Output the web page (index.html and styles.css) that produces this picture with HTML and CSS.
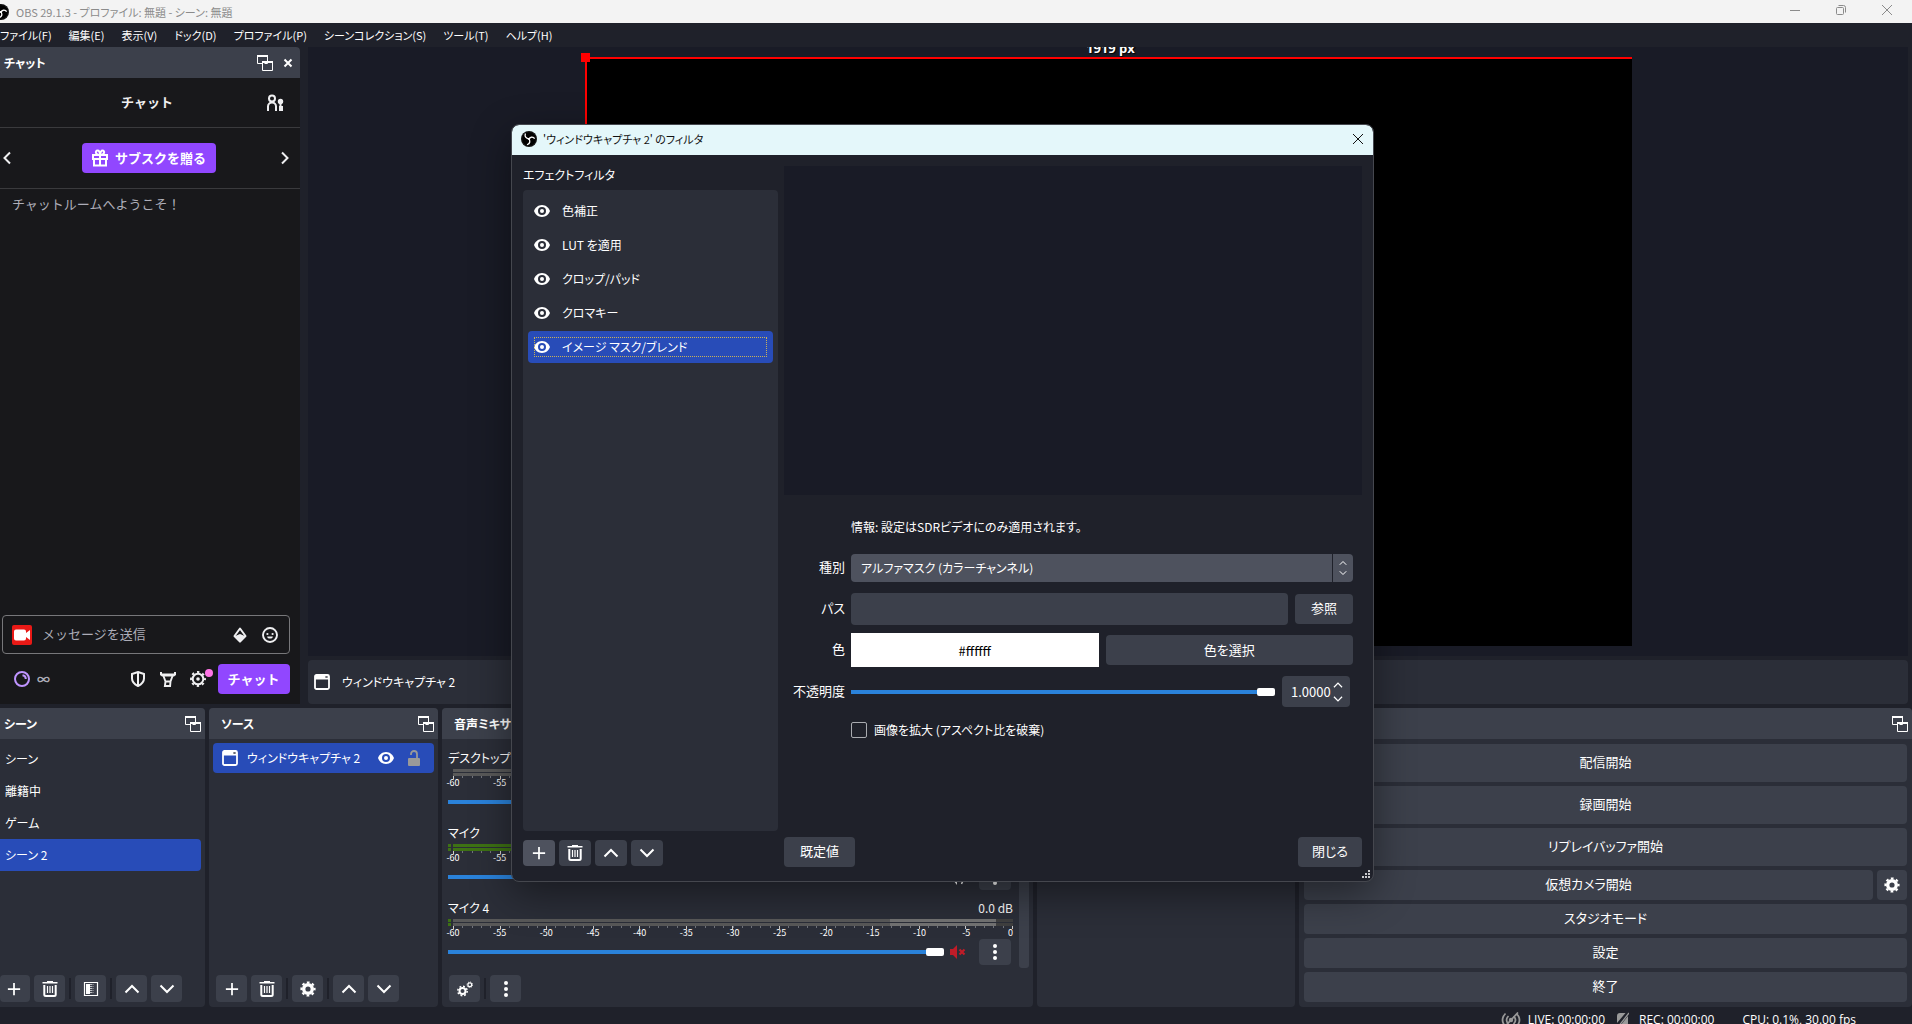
FILE: index.html
```html
<!DOCTYPE html>
<html lang="ja">
<head>
<meta charset="utf-8">
<title>OBS 29.1.3 - プロファイル: 無題 - シーン: 無題</title>
<link rel="stylesheet" href="styles.css">
</head>
<body>
<svg class="sprite" aria-hidden="true">
  <symbol id="obs" viewBox="0 0 16 16"><circle cx="8" cy="8" r="8" fill="#000"/><circle cx="8" cy="8" r="7.3" fill="none" stroke="#fff" stroke-opacity=".25" stroke-width=".4"/><path d="M4.300 3c-.8 2.400.6 4.400 3.700 5M13.300 7.200C11.400 5.600 9 6 8 8M6.500 13.500C8.900 12.700 9.500 10.200 8 8" fill="none" stroke="#fff" stroke-width="1.300" stroke-linecap="round"/><circle cx="8" cy="8" r="1.100" fill="#fff"/></symbol>
  <symbol id="float" viewBox="0 0 16 16"><path d="M.5 .5h10v8h-3M5 8.500H.5v-8" fill="none" stroke="currentColor"/><path d="M0 0h11v2H0zM5 6h11v2H5z" fill="currentColor"/><path d="M5.500 6.500h10v9h-10z" fill="none" stroke="currentColor"/></symbol>
  <symbol id="cross" viewBox="0 0 10 10"><path d="M1.500 1.500l7 7m0-7l-7 7" stroke="currentColor" stroke-width="2" fill="none"/></symbol>
  <symbol id="thincross" viewBox="0 0 12 12"><path d="M1 1l10 10m0-10L1 11" stroke="currentColor" fill="none"/></symbol>
  <symbol id="minimize" viewBox="0 0 12 12"><path d="M1 6.500h10" stroke="currentColor" fill="none"/></symbol>
  <symbol id="restore" viewBox="0 0 12 12"><rect x="1.500" y="3.500" width="7" height="7" rx="1" fill="none" stroke="currentColor"/><path d="M3.500 1.500h5a2 2 0 0 1 2 2v5" stroke="currentColor" fill="none"/></symbol>
  <symbol id="people" viewBox="0 0 18 18"><circle cx="6" cy="4.500" r="3" fill="none" stroke="currentColor" stroke-width="2"/><path d="M2 17v-4.500a4 4 0 0 1 8 0V17" fill="none" stroke="currentColor" stroke-width="2"/><circle cx="14.500" cy="7.500" r="2.700" fill="currentColor"/><path d="M13.500 9h2v3h1.500v5h-4v-5h.5z" fill="currentColor"/></symbol>
  <symbol id="gift" viewBox="0 0 18 18"><path d="M2 6h14v4H2zM3 10h12v6.500H3zM9 6v10M9 6C4 6 4 1.500 6.500 1.500S9 4 9 6s0-4.500 2.500-4.500S14 6 9 6" fill="none" stroke="currentColor" stroke-width="2"/></symbol>
  <symbol id="left" viewBox="0 0 10 14"><path d="M8 1.500L2.500 7 8 12.500" fill="none" stroke="currentColor" stroke-width="2"/></symbol>
  <symbol id="right" viewBox="0 0 10 14"><path d="M2 1.500L7.500 7 2 12.500" fill="none" stroke="currentColor" stroke-width="2"/></symbol>
  <symbol id="up" viewBox="0 0 16 16"><path d="M1.500 11.500L8 5l6.500 6.500" fill="none" stroke="currentColor" stroke-width="2"/></symbol>
  <symbol id="down" viewBox="0 0 16 16"><path d="M1.500 4.500L8 11l6.500-6.500" fill="none" stroke="currentColor" stroke-width="2"/></symbol>
  <symbol id="plus" viewBox="0 0 16 16"><path d="M8 1v14M1 8h14" fill="none" stroke="currentColor" stroke-width="2"/></symbol>
  <symbol id="trash" viewBox="0 0 16 16"><path d="M.5 1.800h15M5 .8h6" fill="none" stroke="currentColor" stroke-width="1.600"/><path d="M2.300 4v9.500q0 1.500 1.500 1.500h8.400q1.500 0 1.500-1.500V4" fill="none" stroke="currentColor" stroke-width="2"/><path d="M5.500 5v7M8 5v7M10.500 5v7" stroke="currentColor" stroke-width="1.200"/></symbol>
  <symbol id="filter" viewBox="0 0 16 16"><path d="M1.500 1.500h13v13h-13z" fill="none" stroke="currentColor" stroke-width="1.200"/><path d="M3 3h4v10H3z" fill="currentColor"/><path d="M8 3v10" stroke="currentColor" stroke-width="1.500" stroke-dasharray="1 1" opacity=".9"/><path d="M10 3v10" stroke="currentColor" stroke-width="1.500" stroke-dasharray="1 1" opacity=".4"/></symbol>
  <symbol id="gear" viewBox="0 0 16 16"><circle cx="8" cy="8" r="4.300" fill="none" stroke="currentColor" stroke-width="3.400"/><circle cx="8" cy="8" r="6.600" fill="none" stroke="currentColor" stroke-width="2" stroke-dasharray="2.700 2.483" stroke-dashoffset="1.350"/></symbol>
  <symbol id="gears" viewBox="0 0 16 16"><circle cx="5.500" cy="10" r="3" fill="none" stroke="currentColor" stroke-width="2"/><circle cx="5.500" cy="10" r="4.700" fill="none" stroke="currentColor" stroke-width="1.500" stroke-dasharray="1.850 1.840"/><circle cx="12.800" cy="3.800" r="1.900" fill="none" stroke="currentColor" stroke-width="1.200"/><circle cx="12.800" cy="3.800" r="2.800" fill="none" stroke="currentColor" stroke-width=".9" stroke-dasharray="1.100 1.100"/></symbol>
  <symbol id="dots" viewBox="0 0 16 16"><circle cx="8" cy="2" r="2" fill="currentColor"/><circle cx="8" cy="8" r="2" fill="currentColor"/><circle cx="8" cy="14" r="2" fill="currentColor"/></symbol>
  <symbol id="window" viewBox="0 0 16 16"><rect x="1" y="1" width="14" height="14" rx="1.500" fill="none" stroke="currentColor" stroke-width="1.800"/><path d="M1 1h14v4.500H1z" fill="currentColor"/><path d="M11.500 2l2 2m0-2l-2 2" stroke="#2b2e38" stroke-width=".9"/></symbol>
  <symbol id="eye" viewBox="0 0 16 12"><path fill-rule="evenodd" d="M8 0c4 0 7 3 8 6-1 3-4 6-8 6S1 9 0 6c1-3 4-6 8-6zm0 2a4 4 0 1 0 0 8 4 4 0 0 0 0-8z" fill="currentColor"/><circle cx="8" cy="6" r="2" fill="currentColor"/></symbol>
  <symbol id="unlock" viewBox="0 0 12 16"><path d="M3 5V4a3 3 0 0 1 6 0v4" fill="none" stroke="currentColor" stroke-width="1.800"/><rect y="8" width="12" height="8" rx="1" fill="currentColor"/></symbol>
  <symbol id="bits" viewBox="0 0 14 16"><path d="M7 1.500L1.500 9 7 14.500 12.500 9z" fill="none" stroke="currentColor" stroke-width="2" stroke-linejoin="round"/><path d="M1 9.500L7 7l6 2.500L7 15.500z" fill="currentColor"/></symbol>
  <symbol id="smile" viewBox="0 0 16 16"><circle cx="8" cy="8" r="7" fill="none" stroke="currentColor" stroke-width="1.900"/><circle cx="5.400" cy="7" r="1.100" fill="currentColor"/><circle cx="10.600" cy="7" r="1.100" fill="currentColor"/><path d="M5.200 9.500h5.600a2.800 2 0 0 1-5.600 0z" fill="currentColor"/></symbol>
  <symbol id="camera" viewBox="0 0 20 20"><rect width="20" height="20" rx="2" fill="#e91916"/><path d="M4 4.500h8a2 2 0 0 1 2 2V8l4-3v10l-4-3v1.500a2 2 0 0 1-2 2H4a2 2 0 0 1-2-2v-7a2 2 0 0 1 2-2z" fill="#fff"/></symbol>
  <symbol id="points" viewBox="0 0 16 16"><circle cx="8" cy="8" r="7" fill="none" stroke="currentColor" stroke-width="2"/><path d="M8.500 4.200A3.800 3.800 0 0 1 11.800 8" fill="none" stroke="currentColor" stroke-width="2"/></symbol>
  <symbol id="shield" viewBox="0 0 14 16"><path d="M7 1l6 2v4.500c0 3-2 5.500-6 7.500-4-2-6-4.500-6-7.500V3z" fill="none" stroke="currentColor" stroke-width="2"/><path d="M7 1v14" stroke="currentColor" stroke-width="2"/></symbol>
  <symbol id="sword" viewBox="0 0 16 16"><path d="M0 1h2v1.500h12V1h2v3l-2 1.500H2L0 4z" fill="currentColor"/><path d="M3.500 5l2 5.500-.6 4.500h5.200l.4-4.500 2-5.500M5.500 10.500h5" fill="none" stroke="currentColor" stroke-width="1.900"/></symbol>
  <symbol id="cog" viewBox="0 0 16 16"><circle cx="8" cy="8" r="5.300" fill="none" stroke="currentColor" stroke-width="2"/><circle cx="8" cy="8" r="7" fill="none" stroke="currentColor" stroke-width="1.900" stroke-dasharray="2.400 3.098" stroke-dashoffset="1.200"/><circle cx="8" cy="8" r="1.800" fill="currentColor"/></symbol>
  <symbol id="muted" viewBox="0 0 16 16"><path d="M0 5h3l4-4v14l-4-4H0z" fill="currentColor"/><path d="M9.500 5.500l5 5m0-5l-5 5" stroke="currentColor" stroke-width="2.200"/></symbol>
  <symbol id="speaker" viewBox="0 0 16 16"><path d="M0 5h3l4-5v16l-4-5H0z" fill="currentColor"/><path d="M9 5q2 3 0 6M11.500 2q4 6 0 13" fill="none" stroke="currentColor" stroke-width="1.500"/></symbol>
  <symbol id="live" viewBox="0 0 20 16"><path d="M4.500 1.500q-6 6.500 0 13M15.500 1.500q6 6.500 0 13M7.500 4q-4 4 0 8M12.500 4q4 4 0 8M3 15.500L17 .5" fill="none" stroke="currentColor" stroke-width="1.700"/><circle cx="10" cy="8" r="2.200" fill="currentColor"/></symbol>
  <symbol id="rec" viewBox="0 0 12 16"><path d="M8.500 1L0 11V4q0-3 3-3zM11 4v7q0 3-3 3H3z" fill="currentColor"/><path d="M1 15L12 1" stroke="currentColor" stroke-width="1.300"/></symbol>
  <symbol id="grip" viewBox="0 0 8 8"><path d="M6 0h2v2H6zM3 3h2v2H3zM6 3h2v2H6zM0 6h2v2H0zM3 6h2v2H3zM6 6h2v2H6z" fill="#c8c9cc"/></symbol>
</svg>

<header class="titlebar">
  <svg class="i16 app-icon"><use href="#obs"/></svg>
  <h1>OBS 29.1.3 - プロファイル: 無題 - シーン: 無題</h1>
  <div class="win-controls">
    <button aria-label="最小化"><svg class="i12"><use href="#minimize"/></svg></button>
    <button aria-label="元に戻す"><svg class="i12"><use href="#restore"/></svg></button>
    <button aria-label="閉じる"><svg class="i12"><use href="#thincross"/></svg></button>
  </div>
</header>
<nav class="menubar">
  <button>ファイル(F)</button><button>編集(E)</button><button>表示(V)</button><button>ドック(D)</button><button>プロファイル(P)</button><button>シーンコレクション(S)</button><button>ツール(T)</button><button>ヘルプ(H)</button>
</nav>

<main class="upper">
  <section class="dock chat">
    <div class="dock-title"><h2>チャット</h2>
      <button class="bare" aria-label="フロート"><svg class="i16"><use href="#float"/></svg></button>
      <button class="bare" aria-label="閉じる"><svg class="i10"><use href="#cross"/></svg></button>
    </div>
    <div class="chat-body">
      <div class="chat-head"><h3>チャット</h3><button class="bare" aria-label="ユーザー"><svg class="i18"><use href="#people"/></svg></button></div>
      <div class="chat-gift">
        <button class="bare" aria-label="前へ"><svg class="chev"><use href="#left"/></svg></button>
        <button class="purple"><svg class="i18"><use href="#gift"/></svg>サブスクを贈る</button>
        <button class="bare" aria-label="次へ"><svg class="chev"><use href="#right"/></svg></button>
      </div>
      <p class="welcome">チャットルームへようこそ！</p>
      <div class="chat-input">
        <svg class="i20"><use href="#camera"/></svg>
        <input type="text" placeholder="メッセージを送信" aria-label="メッセージを送信">
        <button class="bare" aria-label="ビッツ"><svg class="i16"><use href="#bits"/></svg></button>
        <button class="bare" aria-label="エモート"><svg class="i16"><use href="#smile"/></svg></button>
      </div>
      <div class="chat-actions">
        <button class="bare points" aria-label="ポイント"><svg class="i16"><use href="#points"/></svg><span>∞</span></button>
        <button class="bare" aria-label="モデレーション"><svg class="i16"><use href="#shield"/></svg></button>
        <button class="bare" aria-label="モデレーター"><svg class="i16"><use href="#sword"/></svg></button>
        <button class="bare badge" aria-label="設定"><svg class="i16"><use href="#cog"/></svg></button>
        <button class="purple send">チャット</button>
      </div>
    </div>
  </section>
  <section class="stage">
    <div class="preview">
      <span class="px-label">1919 px</span>
      <div class="canvas"></div>
    </div>
    <div class="context"><svg class="i16"><use href="#window"/></svg>ウィンドウキャプチャ 2</div>
  </section>
</main>

<div class="docks">
  <section class="dock scenes">
    <div class="dock-title"><h2>シーン</h2><button class="bare" aria-label="フロート"><svg class="i16"><use href="#float"/></svg></button></div>
    <ul class="scene-list"><li>シーン</li><li>離籍中</li><li>ゲーム</li><li class="selected">シーン 2</li></ul>
    <div class="toolbar">
      <button class="tool" aria-label="追加"><svg class="i14"><use href="#plus"/></svg></button>
      <button class="tool" aria-label="削除"><svg class="i16"><use href="#trash"/></svg></button><hr>
      <button class="tool" aria-label="フィルタ"><svg class="i16"><use href="#filter"/></svg></button><hr>
      <button class="tool" aria-label="上へ"><svg class="i16"><use href="#up"/></svg></button>
      <button class="tool" aria-label="下へ"><svg class="i16"><use href="#down"/></svg></button>
    </div>
  </section>
  <section class="dock sources">
    <div class="dock-title"><h2>ソース</h2><button class="bare" aria-label="フロート"><svg class="i16"><use href="#float"/></svg></button></div>
    <ul class="source-list"><li class="selected"><svg class="i16"><use href="#window"/></svg><span>ウィンドウキャプチャ 2</span><button class="bare" aria-label="表示"><svg class="eye"><use href="#eye"/></svg></button><button class="bare lock" aria-label="ロック"><svg class="i16"><use href="#unlock"/></svg></button></li></ul>
    <div class="toolbar">
      <button class="tool" aria-label="追加"><svg class="i14"><use href="#plus"/></svg></button>
      <button class="tool" aria-label="削除"><svg class="i16"><use href="#trash"/></svg></button><hr>
      <button class="tool" aria-label="プロパティ"><svg class="i16"><use href="#gear"/></svg></button><hr>
      <button class="tool" aria-label="上へ"><svg class="i16"><use href="#up"/></svg></button>
      <button class="tool" aria-label="下へ"><svg class="i16"><use href="#down"/></svg></button>
    </div>
  </section>
  <section class="dock mixer">
    <div class="dock-title"><h2>音声ミキサー</h2></div>
    <div class="mixer-body">
      <div class="channels">
        <div class="channel">
          <div class="ch-name"><label for="v1">デスクトップ音声</label></div>
          <div class="meter"><i></i><i></i></div>
          <div class="scale"><span>-60</span><span>-55</span><span>-50</span><span>-45</span><span>-40</span><span>-35</span><span>-30</span><span>-25</span><span>-20</span><span>-15</span><span>-10</span><span>-5</span><span>0</span></div>
          <div class="ch-ctl"><input id="v1" type="range" value="100"><button class="bare red" aria-label="ミュート"><svg class="i16"><use href="#muted"/></svg></button><button class="tool" aria-label="メニュー"><svg class="i16"><use href="#dots"/></svg></button></div>
        </div>
        <div class="channel live">
          <div class="ch-name"><label for="v2">マイク</label></div>
          <div class="meter"><i></i><i></i></div>
          <div class="scale"><span>-60</span><span>-55</span><span>-50</span><span>-45</span><span>-40</span><span>-35</span><span>-30</span><span>-25</span><span>-20</span><span>-15</span><span>-10</span><span>-5</span><span>0</span></div>
          <div class="ch-ctl"><input id="v2" type="range" value="100"><button class="bare" aria-label="ミュート"><svg class="i16"><use href="#speaker"/></svg></button><button class="tool" aria-label="メニュー"><svg class="i16"><use href="#dots"/></svg></button></div>
        </div>
        <div class="channel idle">
          <div class="ch-name"><label for="v3">マイク 4</label><span>0.0 dB</span></div>
          <div class="meter"><i></i><i></i></div>
          <div class="scale"><span>-60</span><span>-55</span><span>-50</span><span>-45</span><span>-40</span><span>-35</span><span>-30</span><span>-25</span><span>-20</span><span>-15</span><span>-10</span><span>-5</span><span>0</span></div>
          <div class="ch-ctl"><input id="v3" type="range" value="100"><button class="bare red" aria-label="ミュート"><svg class="i16"><use href="#muted"/></svg></button><button class="tool" aria-label="メニュー"><svg class="i16"><use href="#dots"/></svg></button></div>
        </div>
      </div>
      <div class="scrollbar"></div>
    </div>
    <div class="toolbar">
      <button class="tool" aria-label="詳細プロパティ"><svg class="i16"><use href="#gears"/></svg></button><hr>
      <button class="tool" aria-label="メニュー"><svg class="i16"><use href="#dots"/></svg></button>
    </div>
  </section>
  <section class="dock"><div class="dock-title"></div></section>
  <section class="dock controls">
    <div class="dock-title"><button class="bare" aria-label="フロート"><svg class="i16"><use href="#float"/></svg></button></div>
    <div class="control-list">
      <button class="btn tall">配信開始</button>
      <button class="btn tall">録画開始</button>
      <button class="btn tall">リプレイバッファ開始</button>
      <div class="pair"><button class="btn">仮想カメラ開始</button><button class="btn square" aria-label="仮想カメラ設定"><svg class="i16"><use href="#gear"/></svg></button></div>
      <button class="btn">スタジオモード</button>
      <button class="btn">設定</button>
      <button class="btn">終了</button>
    </div>
  </section>
</div>

<footer class="status">
  <svg class="live-icon"><use href="#live"/></svg><span class="st-live">LIVE: 00:00:00</span>
  <svg class="rec-icon"><use href="#rec"/></svg><span class="st-rec">REC: 00:00:00</span>
  <span>CPU: 0.1%, 30.00 fps</span>
</footer>

<div class="dialog" role="dialog" aria-labelledby="dlg-title">
  <div class="dlg-bar"><svg class="i16"><use href="#obs"/></svg><h2 id="dlg-title">'ウィンドウキャプチャ 2' のフィルタ</h2><button class="bare" aria-label="閉じる"><svg class="i12"><use href="#thincross"/></svg></button></div>
  <div class="dlg-body">
    <div class="filters">
      <h3>エフェクトフィルタ</h3>
      <ul>
        <li><svg class="eye"><use href="#eye"/></svg>色補正</li>
        <li><svg class="eye"><use href="#eye"/></svg>LUT を適用</li>
        <li><svg class="eye"><use href="#eye"/></svg>クロップ/パッド</li>
        <li><svg class="eye"><use href="#eye"/></svg>クロマキー</li>
        <li class="selected"><svg class="eye"><use href="#eye"/></svg>イメージ マスク/ブレンド</li>
      </ul>
      <div class="dlg-tools">
        <button class="tool on" aria-label="追加"><svg class="i14"><use href="#plus"/></svg></button>
        <button class="tool" aria-label="削除"><svg class="i16"><use href="#trash"/></svg></button>
        <button class="tool" aria-label="上へ"><svg class="i16"><use href="#up"/></svg></button>
        <button class="tool" aria-label="下へ"><svg class="i16"><use href="#down"/></svg></button>
      </div>
    </div>
    <div class="props">
      <div class="dlg-preview"></div>
      <form class="form">
        <p class="info">情報: 設定はSDRビデオにのみ適用されます。</p>
        <label for="kind">種別</label>
        <div class="combo"><select id="kind"><option>アルファマスク (カラーチャンネル)</option></select><span class="combo-arrows"><svg><use href="#up"/></svg><svg><use href="#down"/></svg></span></div>
        <label for="path">パス</label>
        <div class="line"><input id="path" class="field" type="text" readonly><button type="button" class="btn browse">参照</button></div>
        <label for="color">色</label>
        <div class="line half"><input id="color" class="swatch" type="text" value="#ffffff" readonly><button type="button" class="btn">色を選択</button></div>
        <label for="opacity">不透明度</label>
        <div class="line opacity"><input id="opacity" type="range" value="100"><span class="spin"><input type="text" value="1.0000" aria-label="不透明度の値"><span class="spin-arrows"><svg><use href="#up"/></svg><svg><use href="#down"/></svg></span></span></div>
        <label class="check"><input type="checkbox">画像を拡大 (アスペクト比を破棄)</label>
      </form>
      <div class="dlg-foot"><button class="btn">既定値</button><button class="btn close">閉じる</button></div>
    </div>
  </div>
  <svg class="grip"><use href="#grip"/></svg>
</div>
</body>
</html>
```
FILE: styles.css
```css
* { box-sizing: border-box; }

body {
  margin: 0;
  height: 100vh;
  overflow: hidden;
  display: flex;
  flex-direction: column;
  position: relative;
  background: #1f212a;
  color: #fff;
  font-family: "Noto Sans CJK JP", "Noto Sans", sans-serif;
  font-size: 13px;
  line-height: 20px;
  font-feature-settings: "palt";
}

h1, h2, h3, p, ul { margin: 0; padding: 0; font-size: inherit; font-weight: 400; }
ul { list-style: none; }
button, input, select { font: inherit; font-feature-settings: inherit; color: inherit; margin: 0; }
button { border: 0; padding: 0; cursor: pointer; }
svg { display: block; flex: none; }

.sprite { position: absolute; width: 0; height: 0; }
.i10 { width: 10px; height: 10px; }
.i12 { width: 12px; height: 12px; }
.i14 { width: 14px; height: 14px; }
.i16 { width: 16px; height: 16px; }
.i18 { width: 18px; height: 18px; }
.i20 { width: 20px; height: 20px; }
.eye { width: 16px; height: 12px; }
.chev { width: 10px; height: 14px; }
.bare { background: none; display: flex; align-items: center; }

/* main window frame */
.titlebar { height: 23px; flex: none; display: flex; align-items: center; background: #f3f3f3; color: #8b8b8b; font-size: 11px; }
.app-icon { margin-left: -7px; }
.titlebar h1 { margin-left: 7px; flex: 1; }
.win-controls { display: flex; height: 100%; padding-right: 2px; }
.win-controls button { width: 46px; background: none; display: flex; align-items: center; justify-content: center; padding-bottom: 3px; }
.menubar { height: 24px; flex: none; display: flex; gap: 17px; font-size: 11px; }
.menubar button { background: none; white-space: nowrap; }

.upper { flex: 1; min-height: 0; display: flex; gap: 8px; padding: 0 4px 4px 0; }
.dock { background: #2b2e38; border-radius: 4px; display: flex; flex-direction: column; min-width: 0; overflow: hidden; }
.dock-title { height: 31px; flex: none; display: flex; align-items: center; justify-content: flex-end; gap: 10px; padding: 0 4px 0 12px; background: #3c404b; font-size: 12px; }
.dock-title h2 { flex: 1; font-weight: 600; white-space: nowrap; }

/* chat dock */
.chat { width: 300px; flex: none; border-radius: 0 4px 0 0; background: #18181b; }
.chat .dock-title { padding: 0 7px 0 4px; }
.chat-body { flex: 1; display: flex; flex-direction: column; font-feature-settings: normal; color: #efeff1; }
.chat-head { height: 50px; display: flex; align-items: center; border-bottom: 1px solid #3a3a3d; padding: 0 16px 0 34px; }
.chat-head h3 { flex: 1; text-align: center; font-weight: 600; padding: 0 6px 2px 0; }
.chat-gift { height: 61px; display: flex; align-items: center; justify-content: space-between; border-bottom: 1px solid #3a3a3d; padding: 0 10px 0 2px; }
.chat-gift .purple { margin-left: 6px; }
.purple { height: 30px; display: flex; align-items: center; justify-content: center; gap: 6px; background: #9147ff; border-radius: 4px; color: #fff; font-weight: 700; padding: 0 10px 1px 9px; }
.welcome { flex: 1; padding: 5px 12px; color: #adadb8; }
.chat-input { height: 39px; margin: 0 10px 10px 2px; display: flex; align-items: center; gap: 14px; padding: 0 11px 0 9px; border: 1px solid #77777a; border-radius: 4px; }
.chat-input input { flex: 1; min-width: 0; border: 0; padding: 0 0 2px; background: none; outline: 0; margin-left: -4px; }
.chat-input input::placeholder { color: #adadb8; opacity: 1; }
.chat-actions { height: 30px; margin: 0 10px 10px 14px; display: flex; align-items: center; gap: 14px; }
.points { flex: 1; gap: 7px; color: #bf94ff; }
.points span { color: #adadb8; font-weight: 700; }
.badge { position: relative; }
.badge::after { content: ""; position: absolute; top: -2px; right: -7px; width: 8px; height: 8px; border-radius: 50%; background: #ff75e6; }
.send { width: 72px; margin-left: -2px; }

/* preview */
.stage { flex: 1; min-width: 0; display: flex; flex-direction: column; gap: 4px; }
.preview { flex: 1; position: relative; overflow: hidden; background: #191b26; padding: 10px 276px 10px 277px; display: flex; }
.canvas { flex: 1; position: relative; background: #000; border-top: 2px solid #f00; border-left: 2px solid #f00; }
.canvas::before { content: ""; position: absolute; left: -6px; top: -6px; width: 9px; height: 9px; background: #f00; }
.px-label { position: absolute; left: 778px; top: -9px; font: 700 13px/20px "Open Sans", sans-serif; text-shadow: 1px 1px 1px #000; }
.context { height: 44px; flex: none; display: flex; align-items: center; gap: 12px; padding: 0 6px; background: #2b2e38; border-radius: 4px; font-size: 12px; }

/* lower docks */
.docks { flex: none; display: grid; grid-template-columns: 205fr 229fr 591fr 258fr 613fr; gap: 4px; height: 299px; }
.scenes { border-radius: 0 4px 4px 0; }
.scenes .dock-title { padding-left: 4px; }
.scene-list { flex: 1; padding: 4px 4px 0 0; font-size: 12px; }
.scene-list li { height: 32px; display: flex; align-items: center; padding-left: 5px; border-radius: 0 4px 4px 0; }
.selected { background: #284cb8; }
.source-list { flex: 1; padding: 4px; font-size: 12px; }
.source-list li { height: 30px; display: flex; align-items: center; gap: 9px; padding: 0 12px 0 9px; border-radius: 4px; }
.source-list span { flex: 1; white-space: nowrap; }
.lock { color: #999; margin-left: 3px; }

.toolbar { height: 32px; flex: none; display: flex; gap: 4px; padding: 0 7px 5px; }
.scenes .toolbar { padding-left: 0; }
.scenes .toolbar .tool:first-child { width: 30px; padding-right: 2px; }
.toolbar hr { width: 2px; height: 21px; margin: 3px 0; border: 0; background: #1f212a; }
.tool { width: 31px; height: 27px; flex: none; display: flex; align-items: center; justify-content: center; background: #3c404b; border-radius: 4px; }
.tool.on { background: #4e525e; }

/* mixer */
.mixer-body { flex: 1; min-height: 0; display: flex; gap: 6px; padding: 0 4px 7px 6px; }
.channels { flex: 1; min-width: 0; display: flex; flex-direction: column; gap: 8px; padding-top: 9px; }
.channel { display: flex; flex-direction: column; }
.ch-name { height: 21px; display: flex; justify-content: space-between; font-size: 12px; }
.meter { display: grid; gap: 1px; margin-left: 5px; --bar: linear-gradient(to right, #595959 78%, #737373 78% 97%, #404040 97%); }
.meter i { height: 3px; background: var(--bar); }
.live .meter, .idle .meter { margin-left: 0; padding-left: 5px; background: linear-gradient(#2b2e38, #2b2e38) 0 3px / 100% 1px no-repeat, linear-gradient(#3e7214, #3e7214) 0 0 / 3px 100% no-repeat; }
.live .meter { --bar: linear-gradient(to right, #3e7214 60%, #7a7514 60%); }
.scale { height: 13px; margin-left: 5px; display: flex; justify-content: space-between; font-size: 9px; line-height: 10px; padding-top: 2px;
  background: repeating-linear-gradient(to right, #ccc 0 1px, transparent 1px calc(100% / 12 - 1px / 12)) 0 0 / 100% 3px no-repeat, repeating-linear-gradient(to right, #70737b 0 1px, transparent 1px calc(100% / 60 - 1px / 60)) 0 0 / 100% 2px no-repeat; }
.scale span { width: 0; display: flex; justify-content: center; }
.scale span:last-child { justify-content: flex-end; }
.ch-ctl { height: 26px; display: flex; align-items: center; gap: 6px; padding-right: 2px; }
.ch-ctl input { flex: 1; min-width: 0; }
.ch-ctl .bare { margin-right: 7px; }
.ch-ctl .tool { width: 32px; height: 26px; }
.red { color: #c01c28; }
.scrollbar { width: 10px; background: #3c404b; border-radius: 0 0 3px 3px; }

input[type="range"] { appearance: none; height: 16px; padding: 0; background: linear-gradient(#2a82da, #2a82da) 0 50% / 100% 4px no-repeat; }
input[type="range"]::-webkit-slider-thumb { appearance: none; width: 18px; height: 8px; border-radius: 2px; background: #fff; }

/* controls */
.control-list { flex: 1; display: flex; flex-direction: column; gap: 4px; padding: 5px; }
.btn { height: 30px; background: #3c404b; border-radius: 4px; color: #fff; padding: 0 16px 2px; white-space: nowrap; }
.tall { height: 38px; }
.pair { display: flex; gap: 4px; }
.pair .btn { flex: 1; }
.pair .square { flex: none; width: 30px; padding: 0 7px; }

.status { height: 17px; flex: none; display: flex; justify-content: flex-end; overflow: hidden; padding-right: 56px; font-family: "Open Sans", sans-serif; font-size: 12px; line-height: 26px; }
.status svg { margin-top: 5px; color: #999; }
.live-icon { width: 20px; height: 16px; }
.rec-icon { width: 12px; height: 16px; }
.st-live { margin: 0 12px 0 7px; }
.st-rec { margin: 0 28px 0 10px; }

/* filter dialog */
.dialog { position: absolute; left: 512px; top: 125px; width: 861px; height: 756px; display: flex; flex-direction: column; background: #1f212a; border-radius: 7px; outline: 1px solid #45474e; box-shadow: 0 12px 40px rgba(0, 0, 0, .45); }
.dlg-bar { height: 30px; flex: none; display: flex; align-items: center; gap: 6px; padding: 0 9px 2px; background: #e4f7fa; color: #111; border-radius: 7px 7px 0 0; font-size: 11px; }
.dlg-bar h2 { flex: 1; }
.dlg-body { flex: 1; min-height: 0; display: flex; gap: 6px; padding: 11px 11px 14px; }
.filters { width: 255px; flex: none; display: flex; flex-direction: column; font-size: 12px; }
.filters h3 { height: 24px; line-height: 18px; }
.filters ul { flex: 1; padding: 5px; background: #2b2e38; border-radius: 4px; display: flex; flex-direction: column; gap: 2px; }
.filters li { height: 32px; display: flex; align-items: center; gap: 12px; padding: 0 6px; border-radius: 4px; }
.filters .selected { position: relative; }
.filters .selected::after { content: ""; position: absolute; inset: 6px; border: 1px dotted #c9b25a; }
.dlg-tools { display: flex; gap: 4px; padding: 9px 0 1px; }
.dlg-tools .tool { width: 32px; height: 26px; }
.props { flex: 1; min-width: 0; display: flex; flex-direction: column; }
.dlg-preview { height: 329px; flex: none; background: #191b26; }
.form { flex: 1; display: grid; grid-template-columns: 61px 1fr; grid-template-rows: 42px 40px 41px 42px 41px 36px; column-gap: 6px; align-items: center; align-content: start; padding: 11px 9px 0 0; }
.form > label { text-align: right; padding-bottom: 2px; }
.form .info, .form .check { grid-column: 2; text-align: left; font-size: 12px; padding: 0; }
.combo { display: flex; height: 28px; gap: 1px; font-size: 12px; }
.combo select { flex: 1; min-width: 0; appearance: none; border: 0; background: #4e525e; border-radius: 4px 0 0 4px; padding: 0 10px; }
.combo-arrows { width: 20px; display: flex; flex-direction: column; align-items: center; justify-content: center; gap: 2px; background: #4e525e; border-radius: 0 4px 4px 0; }
.combo-arrows svg { width: 8px; height: 8px; }
.line { display: flex; align-items: center; gap: 7px; }
.field { flex: 1; min-width: 0; height: 32px; border: 0; border-radius: 4px; background: #3c404b; }
.browse { width: 58px; }
.half > * { flex: 1 1 0; min-width: 0; padding: 0 2px; }
.swatch { height: 34px; border: 0; background: #fff; color: #000; text-align: center; }
.opacity { padding-right: 3px; }
.opacity input[type="range"] { flex: 1; min-width: 0; }
.spin { width: 68px; height: 31px; display: flex; align-items: center; background: #3c404b; border-radius: 4px; padding: 0 7px 0 9px; }
.spin input { flex: 1; min-width: 0; border: 0; padding: 0; background: none; }
.spin-arrows { display: flex; flex-direction: column; gap: 4px; }
.spin-arrows svg { width: 10px; height: 10px; }
.check { display: flex; align-items: center; gap: 7px; }
.check input { appearance: none; width: 16px; height: 16px; border: 1px solid #a9abb0; border-radius: 2px; }
.dlg-foot { display: flex; justify-content: space-between; }
.close { padding: 0 14px 2px; }
.grip { position: absolute; right: 3px; bottom: 3px; width: 8px; height: 8px; }
```
